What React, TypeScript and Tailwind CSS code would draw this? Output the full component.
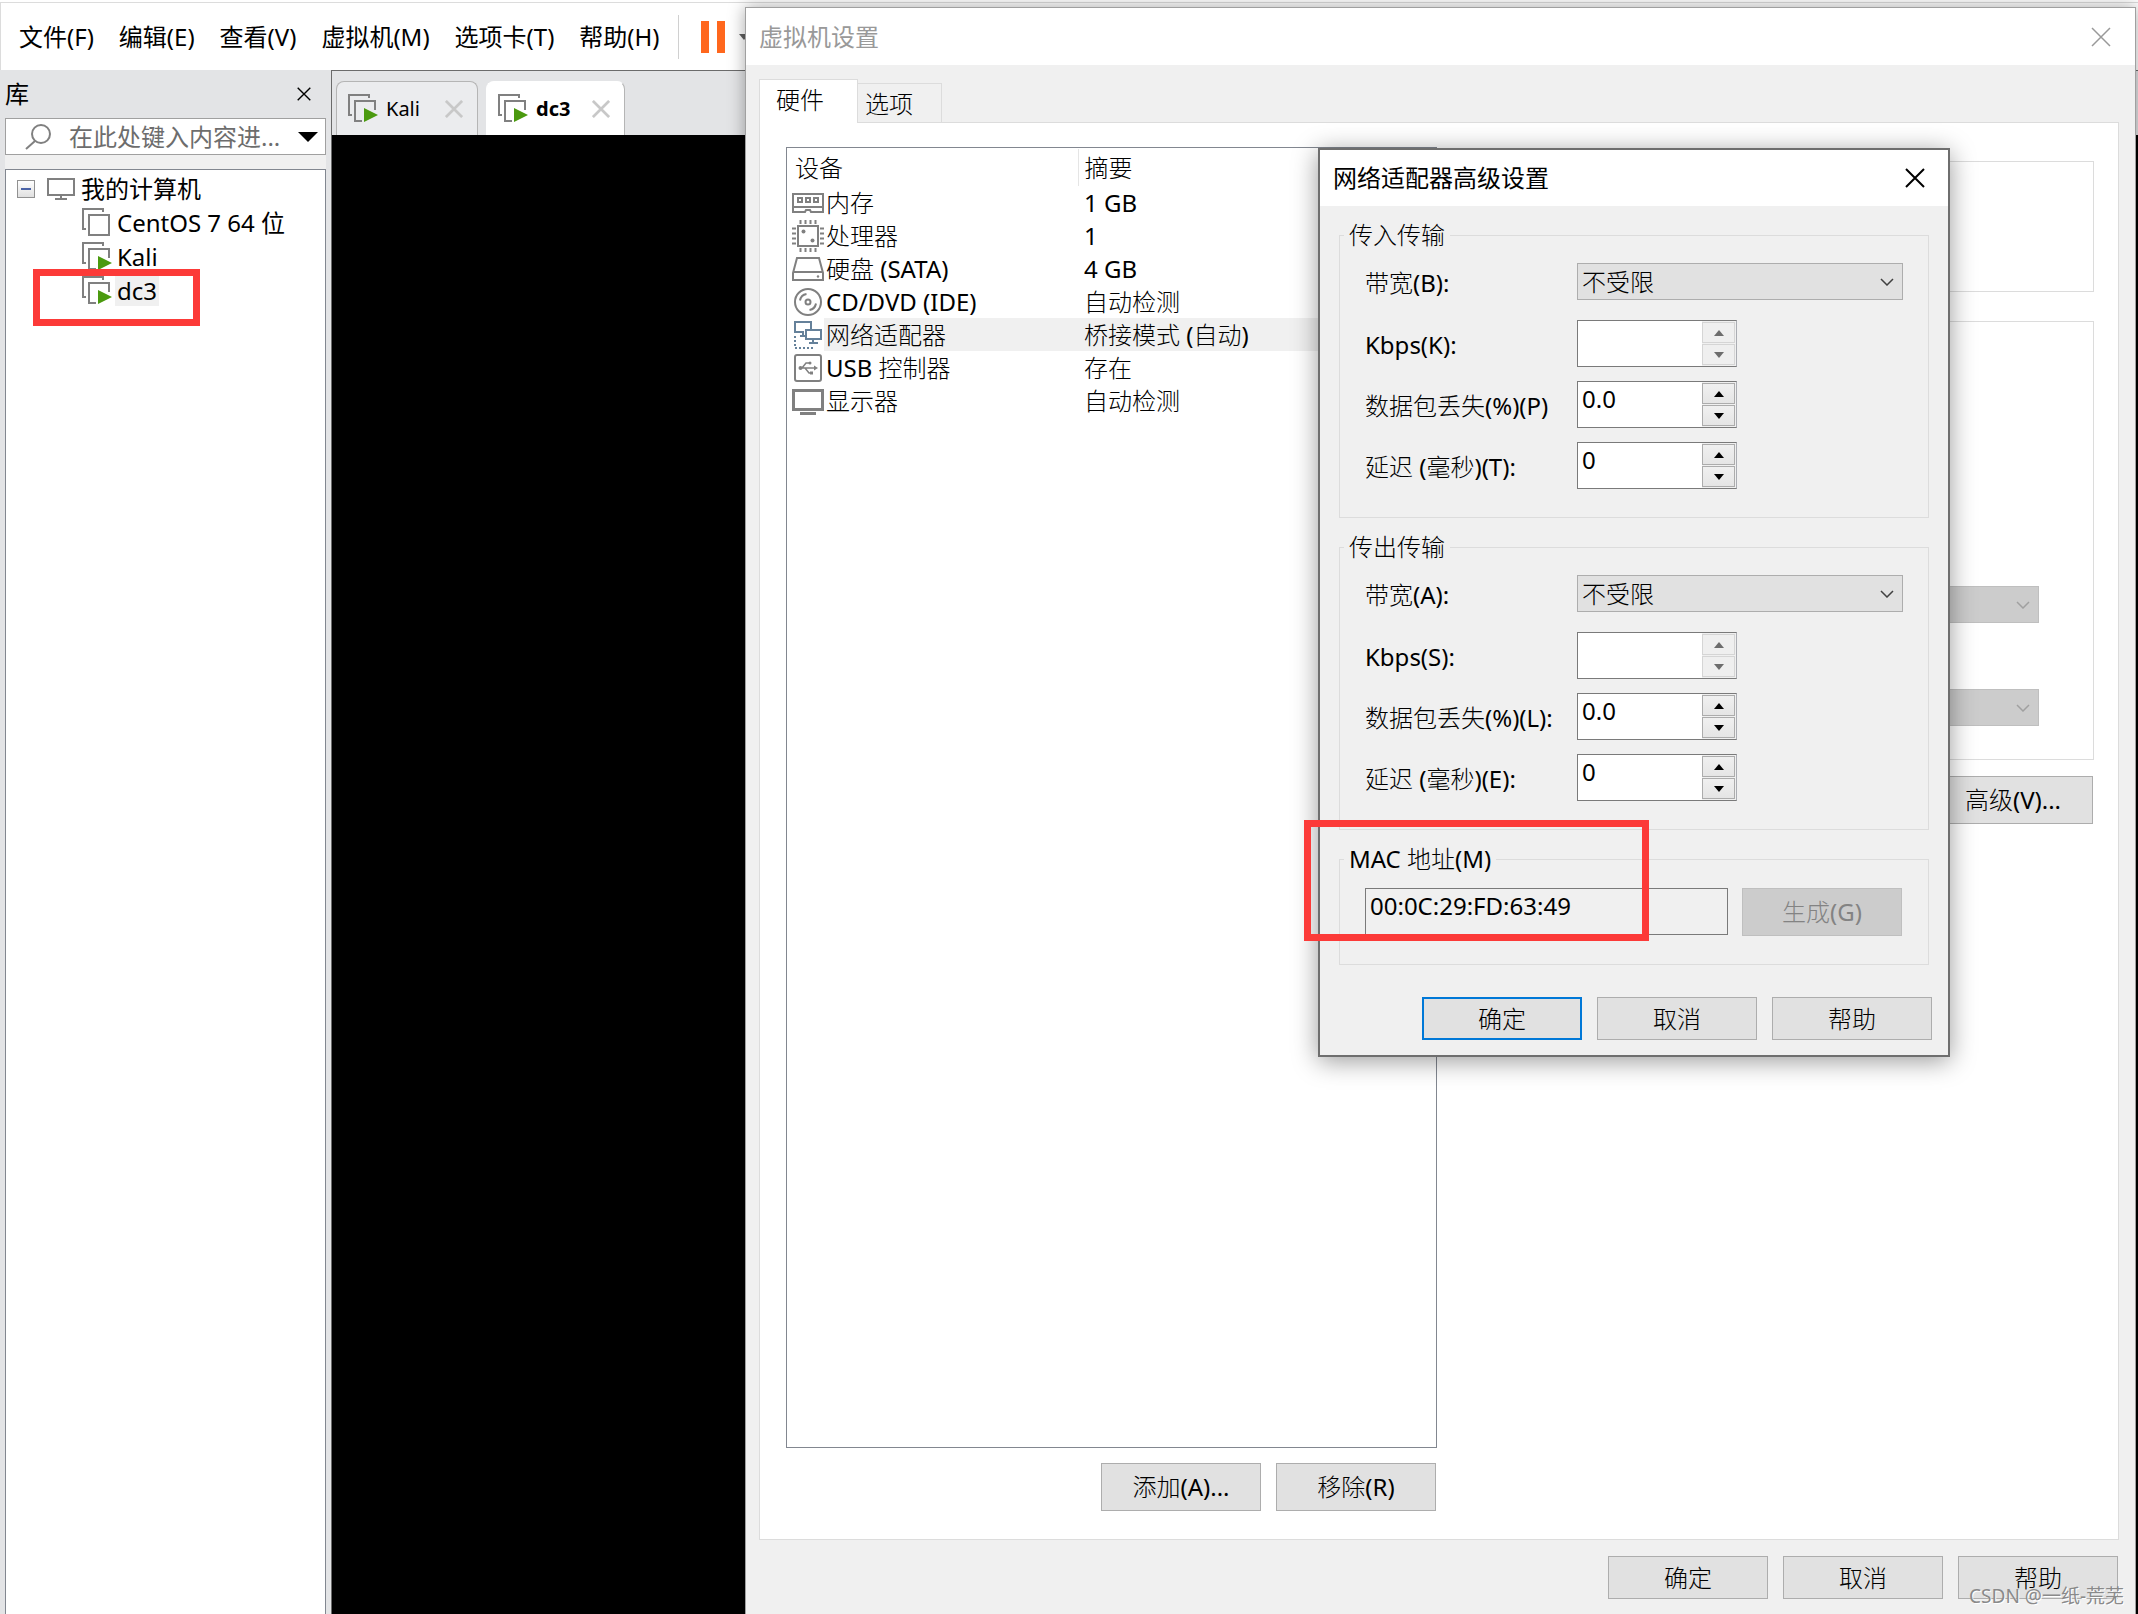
import { useState } from "react";
import type { ReactNode } from "react";

type DeviceIconName = "memory" | "cpu" | "disk" | "cd" | "network" | "usb" | "display";

const menuItems = ["文件(F)", "编辑(E)", "查看(V)", "虚拟机(M)", "选项卡(T)", "帮助(H)"];

const devices: { icon: DeviceIconName; name: string; summary: string }[] = [
  { icon: "memory", name: "内存", summary: "1 GB" },
  { icon: "cpu", name: "处理器", summary: "1" },
  { icon: "disk", name: "硬盘 (SATA)", summary: "4 GB" },
  { icon: "cd", name: "CD/DVD (IDE)", summary: "自动检测" },
  { icon: "network", name: "网络适配器", summary: "桥接模式 (自动)" },
  { icon: "usb", name: "USB 控制器", summary: "存在" },
  { icon: "display", name: "显示器", summary: "自动检测" },
];

// dialog text uses a thinner CJK face than the window titles
const dialogFont = "font-['Noto_Sans','Noto_Sans_CJK_SC_Light','Noto_Sans_CJK_SC',sans-serif]";

function VmIcon({ running = false }: { running?: boolean }) {
  return (
    <svg className="h-[30px] w-[30px] shrink-0" viewBox="0 0 30 30" fill="none" stroke="#808080" strokeWidth="2">
      <path d="M4 21H1V1H21V4" />
      {running ? (
        <>
          <path d="M27 16V7H7V27H14" />
          <path d="M16 14L30 21L16 28Z" fill="#4b9a0f" stroke="none" />
        </>
      ) : (
        <path d="M7 7H27V27H7Z" />
      )}
    </svg>
  );
}

function CloseIcon({ className }: { className: string }) {
  return (
    <svg className={className} viewBox="0 0 20 20" fill="none" stroke="currentColor">
      <path d="M1 1L19 19M19 1L1 19" />
    </svg>
  );
}

function DeviceIcon({ name }: { name: DeviceIconName }) {
  return (
    <svg
      className="block h-8 w-8"
      viewBox="0 0 32 32"
      fill="none"
      stroke={name === "network" ? "#65819a" : "#808080"}
      strokeWidth="2"
    >
      {name === "memory" && (
        <>
          <path d="M1 7H31V25H19L18 23H14L13 25H1Z" />
          <path d="M1 20H31" />
          <path d="M6 11H10V15H6ZM14 11H18V15H14ZM22 11H26V15H22Z" />
        </>
      )}
      {name === "cpu" && (
        <>
          <path d="M6 6H26V26H6Z" />
          <path d="M8.500 0V4M13.500 0V4M18.500 0V4M23.500 0V4M8.500 28V32M13.500 28V32M18.500 28V32M23.500 28V32" />
          <path d="M0 8.500H4M0 13.500H4M0 18.500H4M0 23.500H4M28 8.500H32M28 13.500H32M28 18.500H32M28 23.500H32" />
          <circle cx="11.500" cy="11.500" r="2" fill="#808080" stroke="none" />
          <circle cx="20.500" cy="20.500" r="2" fill="#808080" stroke="none" />
        </>
      )}
      {name === "disk" && (
        <>
          <path d="M1 20L5 5H27L31 20V27H1Z" />
          <path d="M1 19H31" />
          <circle cx="26" cy="23.500" r="1.200" fill="#808080" stroke="none" />
        </>
      )}
      {name === "cd" && (
        <>
          <circle cx="16" cy="16" r="13" />
          <circle cx="16" cy="16" r="2.500" />
          <path d="M8 14.500A8 8 0 0 1 14.500 8M24 17.500A8 8 0 0 1 17.500 24" />
        </>
      )}
      {name === "network" && (
        <>
          <path d="M12 13H3V3H19V10" />
          <path d="M14 11H29V20H14Z" />
          <path d="M21 20V24M17 24H26M8 17H13M11 13V17" />
          <path d="M3 17V29H23" strokeDasharray="2 2" />
        </>
      )}
      {name === "usb" && (
        <>
          <rect x="3" y="3" width="26" height="26" rx="2" />
          <g strokeWidth="1.500">
            <path d="M7 16H23M10 16L14 11H17M13 16L17 21H19" />
            <path d="M22 13.500L26 16L22 18.500Z" fill="#808080" stroke="none" />
            <circle cx="8.500" cy="16" r="2" fill="#808080" stroke="none" />
            <circle cx="18" cy="11" r="1.500" fill="#808080" stroke="none" />
            <path d="M18 19.500H21V22.500H18Z" fill="#808080" stroke="none" />
          </g>
        </>
      )}
      {name === "display" && (
        <>
          <path d="M1.500 5.500H30.500V24.500H1.500Z" strokeWidth="3" />
          <path d="M8 28.500H24" strokeWidth="3" />
        </>
      )}
    </svg>
  );
}

function DialogButton({
  children,
  tall = false,
  primary = false,
  disabled = false,
}: {
  children: ReactNode;
  tall?: boolean;
  primary?: boolean;
  disabled?: boolean;
}) {
  const height = tall ? "h-12" : "h-[43px]";
  let look = "border border-[#adadad] bg-[#e1e1e1] text-black";
  if (primary) look = "border-2 border-[#0078d7] bg-[#e1e1e1] text-black";
  if (disabled) look = "border border-[#bfbfbf] bg-[#cccccc] text-[#838383]";
  return (
    <button type="button" disabled={disabled} className={`w-[160px] shrink-0 leading-[30px] ${height} ${look}`}>
      {children}
    </button>
  );
}

function Dropdown({ id, label, disabled = false }: { id?: string; label?: string; disabled?: boolean }) {
  return (
    <div className="relative w-[326px]">
      <select
        id={id}
        aria-label={label}
        disabled={disabled}
        className={`h-[37px] w-full appearance-none border pl-1 leading-[30px] ${
          disabled ? "border-[#bfbfbf] bg-[#cccccc] opacity-100" : "border-[#adadad] bg-[#e1e1e1]"
        }`}
      >
        <option>{disabled ? "" : "不受限"}</option>
      </select>
      <svg
        className={`pointer-events-none absolute top-[15px] right-[9px] h-2 w-[14px] ${
          disabled ? "text-[#a0a0a0]" : "text-[#404040]"
        }`}
        viewBox="0 0 14 8"
        fill="none"
        stroke="currentColor"
        strokeWidth="1.500"
      >
        <path d="M1 1L7 7L13 1" />
      </svg>
    </div>
  );
}

function SpinBox({ id, initial, disabled = false }: { id: string; initial: string; disabled?: boolean }) {
  const [value, setValue] = useState(initial);
  const button = disabled
    ? "border-[#d5d5d5] bg-[#efefef] text-[#6d6d6d]"
    : "border-[#acacac] bg-linear-to-b from-[#f0f0f0] to-[#e5e5e5] text-black";
  return (
    <div className="flex h-[47px] w-[160px] border border-[#7a7a7a] border-r-[#abadb3] bg-white">
      <input
        id={id}
        type="text"
        value={value}
        disabled={disabled}
        onChange={(e) => setValue(e.target.value)}
        className="w-[124px] bg-white pb-3 pl-1 leading-[30px] outline-none"
      />
      <div className="flex flex-1 flex-col gap-px bg-[#f0f0f0] py-px pr-px">
        <button type="button" disabled={disabled} aria-label="增加" className={`flex flex-1 items-center justify-center border ${button}`}>
          <svg className="h-[6px] w-[10px]" viewBox="0 0 10 6" fill="currentColor">
            <path d="M5 0L10 6H0Z" />
          </svg>
        </button>
        <button type="button" disabled={disabled} aria-label="减少" className={`flex flex-1 items-center justify-center border ${button}`}>
          <svg className="h-[6px] w-[10px]" viewBox="0 0 10 6" fill="currentColor">
            <path d="M0 0H10L5 6Z" />
          </svg>
        </button>
      </div>
    </div>
  );
}

function Field({ id, label, children }: { id: string; label: string; children: ReactNode }) {
  return (
    <div className="flex items-center">
      <label htmlFor={id} className="w-[212px] shrink-0 pt-[2px] leading-[30px] whitespace-nowrap">
        {label}
      </label>
      {children}
    </div>
  );
}

function TransferGroup({
  id,
  title,
  labels,
}: {
  id: string;
  title: string;
  labels: [string, string, string, string];
}) {
  return (
    <fieldset className="border border-[#dcdcdc] pt-[13px] pb-7">
      <legend className="ml-1 px-[5px] leading-[30px]">{title}</legend>
      <div className="pl-[25px]">
        <Field id={`${id}-bandwidth`} label={labels[0]}>
          <Dropdown id={`${id}-bandwidth`} />
        </Field>
        <div className="mt-5 flex flex-col gap-[14px]">
          <Field id={`${id}-kbps`} label={labels[1]}>
            <SpinBox id={`${id}-kbps`} initial="" disabled />
          </Field>
          <Field id={`${id}-loss`} label={labels[2]}>
            <SpinBox id={`${id}-loss`} initial="0.0" />
          </Field>
          <Field id={`${id}-delay`} label={labels[3]}>
            <SpinBox id={`${id}-delay`} initial="0" />
          </Field>
        </div>
      </div>
    </fieldset>
  );
}

function MenuBar() {
  return (
    <header className="flex h-[68px] items-center border-t border-l border-[#dcdcdc] bg-white pl-[18px]">
      <nav className="flex gap-[25px]">
        {menuItems.map((item) => (
          <button key={item} type="button" className="leading-[30px] whitespace-nowrap">
            {item}
          </button>
        ))}
      </nav>
      <div className="ml-[18px] h-11 w-px bg-[#d0d0d0]" />
      <button type="button" aria-label="挂起" className="ml-[22px] flex gap-2">
        <span className="h-8 w-2 bg-[#ff671d]" />
        <span className="h-8 w-2 bg-[#ff671d]" />
      </button>
      <svg className="ml-[14px] h-[6px] w-[10px]" viewBox="0 0 10 6" fill="#606060">
        <path d="M0 0H10L5 6Z" />
      </svg>
    </header>
  );
}

function LibraryPanel() {
  return (
    <aside className="flex w-[331px] shrink-0 flex-col pr-[5px] pl-[5px]">
      <div className="flex h-12 items-center justify-between pr-[15px]">
        <h2 className="leading-[30px]">库</h2>
        <button type="button" aria-label="关闭库">
          <CloseIcon className="h-[14px] w-[14px] stroke-2" />
        </button>
      </div>
      <div className="flex h-[37px] items-center border border-[#a0a0a0] bg-white pr-[7px] pl-[19px]">
        <svg className="h-[26px] w-[26px] shrink-0" viewBox="0 0 26 26" fill="none" stroke="#808080" strokeWidth="2">
          <circle cx="16" cy="10" r="9" />
          <path d="M10 17L1 25" />
        </svg>
        <input
          type="text"
          aria-label="搜索库"
          placeholder="在此处键入内容进..."
          className="ml-[18px] min-w-0 flex-1 leading-[30px] outline-none placeholder:text-[#6d6d6d]"
        />
        <svg className="h-[10px] w-5 shrink-0" viewBox="0 0 20 10">
          <path d="M0 0H20L10 10Z" />
        </svg>
      </div>
      <div className="h-[14px] bg-[#f0f0f0]" />
      <div className="relative flex-1 border border-b-0 border-[#828790] bg-white pt-[2px] leading-[30px]">
        <div className="flex h-[34px] items-center pl-[11px]">
          <button
            type="button"
            aria-label="折叠"
            className="flex h-[18px] w-[18px] items-center justify-center border border-[#919191] bg-linear-to-b from-white to-[#e0e0e0]"
          >
            <span className="h-[2px] w-[10px] bg-[#4b63a7]" />
          </button>
          <svg className="ml-3 h-[22px] w-7" viewBox="0 0 28 22" fill="none" stroke="#808080" strokeWidth="2">
            <path d="M1 1H27V17H1ZM14 17V21M8 21H20" />
          </svg>
          <span className="ml-[6px]">我的计算机</span>
        </div>
        <ul className="pl-[76px]">
          <li className="flex h-[34px] items-center gap-[3px]">
            <VmIcon />
            <span className="px-[2px]">CentOS 7 64 位</span>
          </li>
          <li className="flex h-[34px] items-center gap-[3px]">
            <VmIcon running />
            <span className="px-[2px]">Kali</span>
          </li>
          <li className="flex h-[34px] items-center gap-[3px]">
            <VmIcon running />
            <span className="bg-[#f0f0f0] px-[2px]">dc3</span>
          </li>
        </ul>
        {/* highlight around the dc3 machine */}
        <div className="absolute top-[99px] left-[27px] h-[57px] w-[167px] border-[7px] border-[#fc3a38]" />
      </div>
    </aside>
  );
}

function MachineTab({ name, active = false }: { name: string; active?: boolean }) {
  return (
    <div
      className={`flex h-[54px] items-center rounded-t-lg border border-b-0 pl-[11px] text-xl leading-[30px] ${
        active ? "w-[139px] border-white border-r-[#b5b5b5] bg-white font-bold" : "w-[142px] border-[#b5b5b5] bg-[#ebecee]"
      }`}
    >
      <VmIcon running />
      <span className="ml-2 flex-1 whitespace-nowrap">{name}</span>
      <button type="button" aria-label={`关闭 ${name}`} className="mr-[14px] text-[#c8c8c8]">
        <CloseIcon className="h-[18px] w-[18px] stroke-3" />
      </button>
    </div>
  );
}

function SettingsWindow() {
  return (
    <section className="absolute top-[7px] right-[2px] bottom-0 left-[745px] flex flex-col border border-b-0 border-[#a0a0a0] bg-[#f0f0f0] shadow-[0_0_16px_rgba(0,0,0,0.35)]">
      <div className="flex h-[57px] shrink-0 items-center justify-between bg-white pr-6 pl-[13px] text-[#999999]">
        <h1 className="leading-[30px]">虚拟机设置</h1>
        <button type="button" aria-label="关闭">
          <CloseIcon className="h-5 w-5 stroke-[1.500px]" />
        </button>
      </div>
      <div className={`flex flex-1 flex-col pt-[14px] pr-4 pb-[15px] pl-[13px] ${dialogFont}`}>
        <div role="tablist" className="flex items-end leading-[30px]">
          <button
            type="button"
            role="tab"
            aria-selected="true"
            className="z-10 -mb-px h-[44px] w-[99px] border border-b-0 border-[#dcdcdc] bg-white pb-1 pl-4 text-left"
          >
            硬件
          </button>
          <button
            type="button"
            role="tab"
            aria-selected="false"
            className="h-[39px] w-[84px] border border-b-0 border-l-0 border-[#dcdcdc] pt-[2px] pl-[7px] text-left"
          >
            选项
          </button>
        </div>
        <div className="flex flex-1 border border-[#dcdcdc] bg-white pt-6 pr-6 pb-7 pl-[26px]">
          <div className="flex w-[651px] shrink-0 flex-col">
            <div className="flex-1 border border-[#828790] pt-px">
              <table className="w-full table-fixed border-collapse text-left leading-[30px]">
                <colgroup>
                  <col className="w-[37px]" />
                  <col className="w-[254px]" />
                  <col />
                </colgroup>
                <thead>
                  <tr className="h-[37px]">
                    <th colSpan={2} className="border-r border-[#e5e5e5] pl-2 font-normal">
                      设备
                    </th>
                    <th className="pl-[6px] font-normal">摘要</th>
                  </tr>
                </thead>
                <tbody>
                  {devices.map((device) => {
                    const selected = device.icon === "network" ? "bg-[#f0f0f0]" : "";
                    return (
                      <tr key={device.name} className="h-[33px]">
                        <td className="pl-[5px]">
                          <DeviceIcon name={device.icon} />
                        </td>
                        <td className={`pl-[2px] ${selected}`}>{device.name}</td>
                        <td className={`pl-[6px] ${selected}`}>{device.summary}</td>
                      </tr>
                    );
                  })}
                </tbody>
              </table>
            </div>
            <div className="mt-[15px] flex justify-end gap-[15px] pr-px">
              <DialogButton tall>添加(A)...</DialogButton>
              <DialogButton tall>移除(R)</DialogButton>
            </div>
          </div>
          <div className="ml-5 flex flex-1 flex-col items-end pt-[14px]">
            <div className="h-[131px] w-full border border-[#dcdcdc]" />
            <div className="mt-[29px] flex h-[439px] w-full flex-col items-end gap-[66px] border border-[#dcdcdc] pt-[264px] pr-[54px]">
              <Dropdown label="自定义虚拟网络" disabled />
              <Dropdown label="LAN 区段" disabled />
            </div>
            <div className="mt-4 pr-px">
              <DialogButton tall>高级(V)...</DialogButton>
            </div>
          </div>
        </div>
        <div className="mt-4 flex justify-end gap-[15px] pr-px">
          <DialogButton>确定</DialogButton>
          <DialogButton>取消</DialogButton>
          <DialogButton>帮助</DialogButton>
        </div>
      </div>
    </section>
  );
}

function AdvancedDialog() {
  return (
    <section
      role="dialog"
      aria-label="网络适配器高级设置"
      className="absolute top-[148px] left-[1318px] w-[632px] border-2 border-[#6e6e6e] bg-[#f0f0f0] shadow-[0_4px_24px_rgba(0,0,0,0.4)]"
    >
      <div className="flex h-14 items-center justify-between bg-white pr-[23px] pl-[13px]">
        <h2 className="leading-[30px]">网络适配器高级设置</h2>
        <button type="button" aria-label="关闭">
          <CloseIcon className="h-5 w-5 stroke-2" />
        </button>
      </div>
      <div className={dialogFont}>
        <div className="flex flex-col gap-[14px] px-[19px] pt-[14px]">
          <TransferGroup
            id="in"
            title="传入传输"
            labels={["带宽(B):", "Kbps(K):", "数据包丢失(%)(P)", "延迟 (毫秒)(T):"]}
          />
          <TransferGroup
            id="out"
            title="传出传输"
            labels={["带宽(A):", "Kbps(S):", "数据包丢失(%)(L):", "延迟 (毫秒)(E):"]}
          />
          <fieldset className="border border-[#dcdcdc] pt-[14px] pb-7">
            <legend className="ml-1 px-[5px] leading-[30px]">
              <label htmlFor="mac">MAC 地址(M)</label>
            </legend>
            <div className="flex gap-[14px] pl-[25px]">
              <input
                id="mac"
                type="text"
                readOnly
                defaultValue="00:0C:29:FD:63:49"
                className="h-[47px] w-[363px] border border-[#7a7a7a] bg-[#f0f0f0] pb-3 pl-1 leading-[30px] outline-none"
              />
              <DialogButton tall disabled>
                生成(G)
              </DialogButton>
            </div>
          </fieldset>
        </div>
        <div className="flex justify-end gap-[15px] pt-8 pr-4 pb-[15px]">
          <DialogButton primary>确定</DialogButton>
          <DialogButton>取消</DialogButton>
          <DialogButton>帮助</DialogButton>
        </div>
      </div>
      {/* highlight around the MAC address */}
      <div className="pointer-events-none absolute top-[670px] -left-4 h-[121px] w-[345px] border-[7px] border-[#fc3a38]" />
    </section>
  );
}

export default function App() {
  return (
    <div className="relative flex min-h-screen flex-col overflow-hidden bg-white pt-[2px] font-['Noto_Sans','Noto_Sans_CJK_SC',sans-serif] text-2xl text-black">
      <MenuBar />
      <div className="flex flex-1 bg-[#e3e4e6]">
        <LibraryPanel />
        <main className="flex flex-1 flex-col border-t border-l border-[#6b6b6b]">
          <div className="flex h-16 items-end gap-2 pl-1">
            <MachineTab name="Kali" />
            <MachineTab name="dc3" active />
          </div>
          <div className="flex-1 bg-black" />
        </main>
      </div>
      <SettingsWindow />
      <AdvancedDialog />
      <div className="absolute right-[14px] bottom-[6px] text-[19px] leading-6 text-[#8a8a8a] [text-shadow:1px_1px_0_#ffffff]">
        CSDN @一纸-荒芜
      </div>
    </div>
  );
}
